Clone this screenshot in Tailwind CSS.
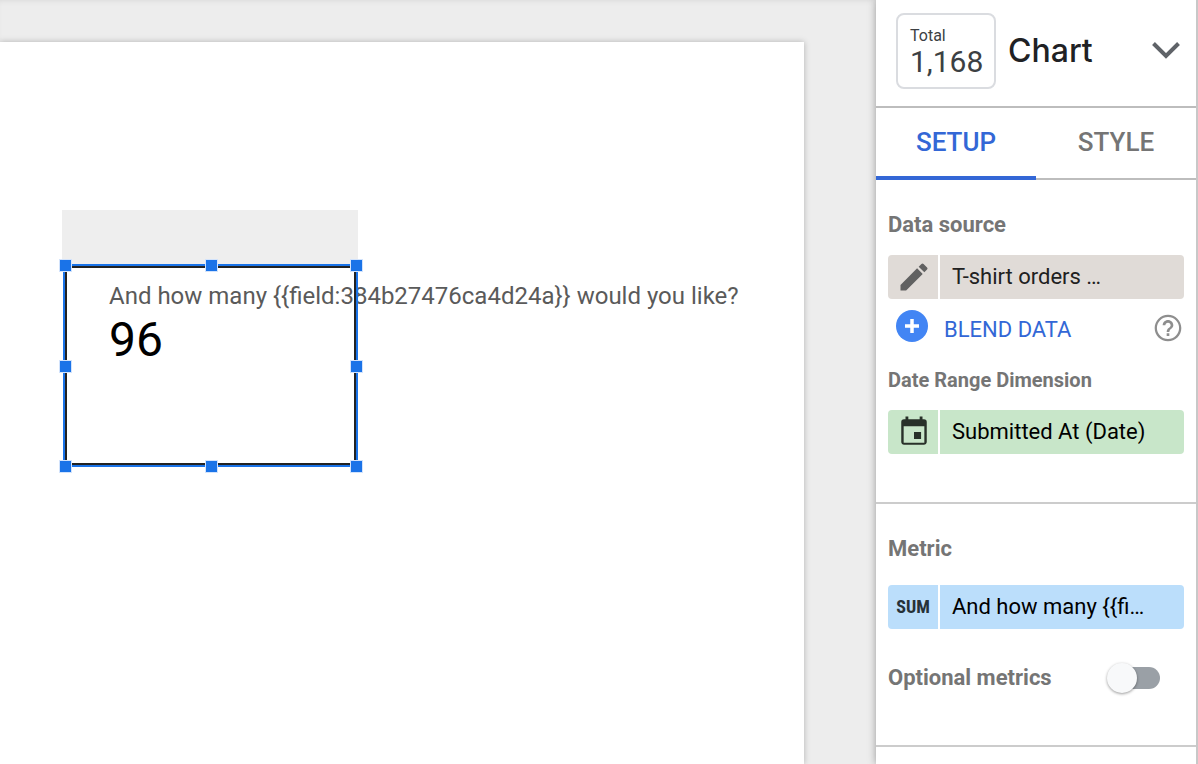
<!DOCTYPE html>
<html lang="en">
<head>
    <meta charset="UTF-8">
    <meta name="viewport" content="width=device-width, initial-scale=1.0">
    <title>Report editor</title>
    <script src="https://cdn.jsdelivr.net/npm/@tailwindcss/browser@4"></script>
</head>
<body class="flex h-screen overflow-hidden bg-[#ededed] font-[Roboto,sans-serif] text-black">

    <!-- Report canvas -->
    <main class="flex-1 min-w-0 pt-[42px] pr-[72px] shadow-[inset_0_4px_6px_-4px_rgba(0,0,0,0.1)]">
        <div class="relative h-full bg-white shadow-[0_0_6px_rgba(0,0,0,0.25)]">
            <div class="absolute left-[62px] top-[168px] w-[296px] h-[60px] bg-[#eeeeee]"></div>

            <!-- Selected scorecard -->
            <div class="absolute left-[63px] top-[222px] w-[295px] h-[203px] bg-white">
                <div class="pl-[46px] pt-4 whitespace-nowrap">
                    <div class="text-2xl leading-8 text-[#5a5a5a]">And how many {{field:384b27476ca4d24a}} would you like?</div>
                    <div class="text-5xl leading-14">96</div>
                </div>
                <div class="absolute inset-0 border-2 border-[#1a73e8]">
                    <div class="h-full border-2 border-[#222222] rounded-sm"></div>
                </div>
                <div class="absolute -left-1 -top-[5px] size-[13px] bg-[#1a73e8] border border-[#d2e3fc]"></div>
                <div class="absolute left-[142px] -top-[5px] size-[13px] bg-[#1a73e8] border border-[#d2e3fc]"></div>
                <div class="absolute -right-[5px] -top-[5px] size-[13px] bg-[#1a73e8] border border-[#d2e3fc]"></div>
                <div class="absolute -left-1 top-24 size-[13px] bg-[#1a73e8] border border-[#d2e3fc]"></div>
                <div class="absolute -right-[5px] top-24 size-[13px] bg-[#1a73e8] border border-[#d2e3fc]"></div>
                <div class="absolute -left-1 -bottom-[6px] size-[13px] bg-[#1a73e8] border border-[#d2e3fc]"></div>
                <div class="absolute left-[142px] -bottom-[6px] size-[13px] bg-[#1a73e8] border border-[#d2e3fc]"></div>
                <div class="absolute -right-[5px] -bottom-[6px] size-[13px] bg-[#1a73e8] border border-[#d2e3fc]"></div>
            </div>
        </div>
    </main>

    <!-- Properties panel -->
    <aside class="relative w-[322px] shrink-0 bg-white border-r-2 border-[#c8c8c8] shadow-[0_0_8px_rgba(0,0,0,0.35)]">
        <header class="flex items-center h-[108px] pl-5 pr-4 pb-1 border-b-2 border-[#bdbdbd]">
            <div class="w-[100px] h-[76px] pl-3 pt-[11px] border-2 border-[#dadce0] rounded-lg text-[#3c4043]">
                <div class="text-base leading-5">Total</div>
                <div class="text-3xl leading-8">1,168</div>
            </div>
            <h1 class="ml-3 flex-1 font-['Inter',sans-serif] font-medium text-[32px] leading-10 text-[#202124]">Chart</h1>
            <button type="button" aria-label="Change chart type">
                <svg class="w-7 h-5" viewBox="0 0 28 20" fill="none" stroke="#5f6368" stroke-width="4"><path d="M1.500 2.500 14 15 26.500 2.500"/></svg>
            </button>
        </header>

        <nav class="flex h-[72px] text-[26px] font-medium" role="tablist">
            <button type="button" role="tab" aria-selected="true" class="flex-1 border-b-4 border-[#3367d6] text-[#3367d6]">SETUP</button>
            <button type="button" role="tab" aria-selected="false" class="flex-1 pb-[2px] border-b-2 border-[#bdbdbd] text-[#757575]">STYLE</button>
        </nav>

        <section class="h-[324px] px-3 pt-[29px] border-b-2 border-[#cccccc]">
            <h2 class="text-[22px] leading-8 font-bold text-[#757575]">Data source</h2>
            <div class="flex gap-[2px] h-11 mt-[14px]">
                <button type="button" aria-label="Edit data source" class="flex items-center justify-center w-[50px] pl-[2px] rounded-l bg-[#e0dbd7]">
                    <svg class="size-9" viewBox="0 0 24 24" fill="#616161"><path d="M3 17.250V21h3.750L17.810 9.940l-3.750-3.750L3 17.250zM20.710 7.040a1 1 0 0 0 0-1.410l-2.340-2.340a1 1 0 0 0-1.410 0l-1.830 1.830 3.750 3.750 1.830-1.830z"/></svg>
                </button>
                <button type="button" class="flex-1 pl-3 pb-[2px] rounded-r bg-[#e0dbd7] text-left text-[22px] text-[#212121]">T-shirt orders …</button>
            </div>
            <div class="flex items-center h-[60px] pl-2">
                <button type="button" class="flex items-center gap-4 text-[22px] text-[#3367d6]">
                    <svg class="size-8 mb-[6px]" viewBox="0 0 32 32"><circle cx="16" cy="16" r="16" fill="#4285f4"/><path d="M16 9v14M9 16h14" stroke="#fff" stroke-width="3.500"/></svg>
                    BLEND DATA
                </button>
                <button type="button" aria-label="Help" class="ml-auto mb-[2px]">
                    <svg class="size-8" viewBox="0 0 24 24" fill="#8e8e8e"><path d="M11 18h2v-2h-2v2zm1-16C6.480 2 2 6.480 2 12s4.480 10 10 10 10-4.480 10-10S17.520 2 12 2zm0 18.300a8.300 8.300 0 1 1 0-16.600 8.300 8.300 0 0 1 0 16.600zM12 6c-2.210 0-4 1.790-4 4h2c0-1.100.9-2 2-2s2 .9 2 2c0 2-3 1.750-3 5h2c0-2.250 3-2.500 3-5 0-2.210-1.790-4-4-4z"/></svg>
                </button>
            </div>
            <h3 class="mt-[5px] text-xl leading-8 font-bold text-[#757575]">Date Range Dimension</h3>
            <div class="flex gap-[2px] h-11 mt-[14px]">
                <button type="button" aria-label="Edit date field" class="flex items-center justify-center w-[50px] pl-[2px] rounded-l bg-[#c8e6c9]">
                    <svg class="size-[34px]" viewBox="0 0 24 24" fill="#283129"><path d="M17 12h-5v5h5v-5zM16 1v2H8V1H6v2H5a2 2 0 0 0-2 2v14c0 1.100.9 2 2 2h14c1.100 0 2-.9 2-2V5a2 2 0 0 0-2-2h-1V1h-2zm3.300 18.500H4.700V8h14.600v11.500z"/></svg>
                </button>
                <button type="button" class="flex-1 pl-3 pb-[2px] rounded-r bg-[#c8e6c9] text-left text-[22px]">Submitted At (Date)</button>
            </div>
        </section>

        <section class="h-[243px] px-3 pt-[29px] border-b-2 border-[#cccccc]">
            <h2 class="text-[22px] leading-8 font-bold text-[#757575]">Metric</h2>
            <div class="flex gap-[2px] h-11 mt-5">
                <button type="button" class="w-[50px] rounded-l bg-[#bbdefb] font-['Roboto_Condensed',Roboto,sans-serif] text-lg font-bold text-[#263238]">SUM</button>
                <button type="button" class="flex-1 pl-3 pb-[2px] rounded-r bg-[#bbdefb] text-left text-[22px]">And how many {{fi…</button>
            </div>
            <div class="flex items-center justify-between mt-[33px] pr-6">
                <label for="optional-metrics" class="text-[22px] leading-8 font-bold text-[#757575]">Optional metrics</label>
                <input type="checkbox" id="optional-metrics" role="switch"
                       class="relative appearance-none w-12 h-[22px] rounded-full bg-[#9aa0a6] before:absolute before:-left-[5px] before:-top-1 before:size-[30px] before:rounded-full before:bg-[#f8f9fa] before:shadow-[0_1px_3px_rgba(0,0,0,0.4)] checked:bg-[#8ab4f8] checked:before:left-6 checked:before:bg-[#1a73e8]">
            </div>
        </section>
    </aside>

</body>
</html>
